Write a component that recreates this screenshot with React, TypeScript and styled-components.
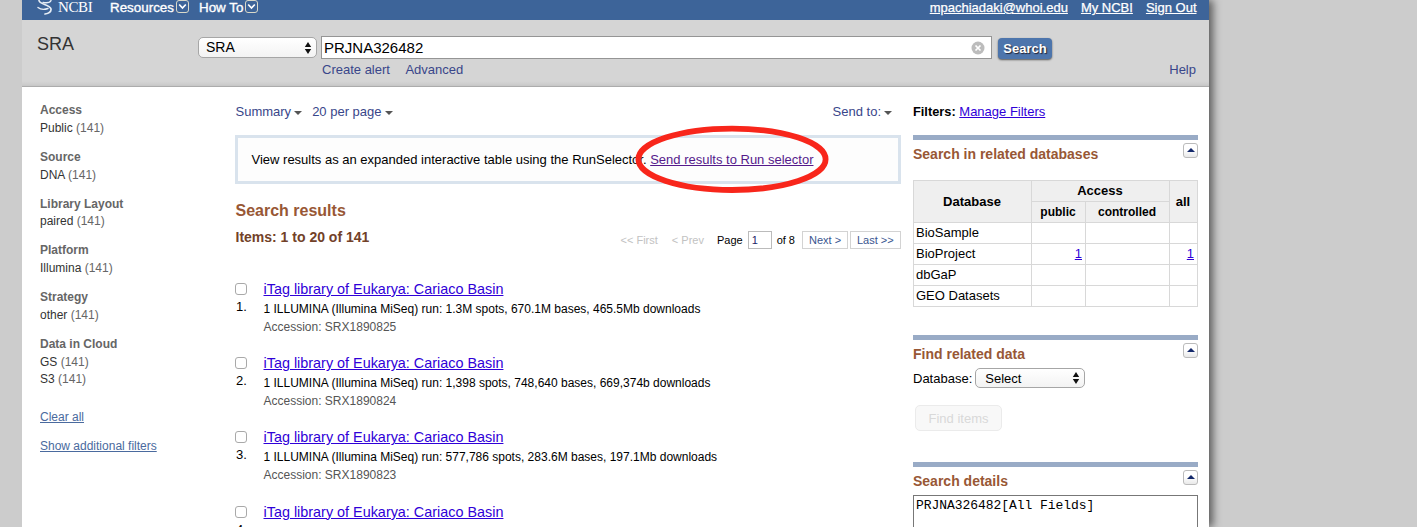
import React from "react";
import styled, { createGlobalStyle } from "styled-components";

const Global = createGlobalStyle`
  * { box-sizing: border-box; }
  html, body { margin: 0; height: 527px; overflow: hidden; background: #cccccc; }
  body { font-family: "Liberation Sans", Arial, Helvetica, sans-serif; font-size: 13px; color: #000; }
  a { color: #2f00d8; text-decoration: underline; }
`;

const Page = styled.div`
  width: 1187px;
  height: 527px;
  margin-left: 22px;
  background: #fff;
  box-shadow: 4px 0 8px rgba(0, 0, 0, 0.55);
  clip-path: inset(0 -14px 0 0);
`;

const TopBar = styled.header`
  height: 20px;
  display: flex;
  align-items: flex-start;
  background: #3d6499;
  color: #fff;
`;

const Logo = styled.div`
  display: flex;
  align-items: flex-start;
  width: 73px;
  margin-left: 15px;
  font: 15px/14px "Liberation Serif", "Times New Roman", serif;
  svg { display: block; margin-right: 5px; }
  span { letter-spacing: -0.4px; }
`;

const MenuItem = styled.div<{ $width: number }>`
  display: flex;
  gap: 2px;
  width: ${(p) => p.$width}px;
  font-size: 13.4px;
  line-height: 15px;
  white-space: nowrap;
  -webkit-text-stroke: 0.35px #fff;
  svg { display: block; }
`;

const UserLinks = styled.nav`
  margin-left: auto;
  margin-right: 12.5px;
  display: flex;
  gap: 13px;
  line-height: 15px;
  a { color: #fff; -webkit-text-stroke: 0.25px #fff; }
`;

const SearchBand = styled.section`
  height: 67px;
  background: linear-gradient(#d5d5d5 0 61px, #cecece 64px, #c6c6c6 66px, #acacac 66px);
  display: flex;
  padding-top: 16px;
`;

const DbName = styled.h1`
  margin: -1px 0 0 15px;
  width: 161px;
  font-size: 18px;
  line-height: 18px;
  font-weight: 400;
  color: #333;
`;

const SelectBox = styled.div<{ $width: number; $height: number; $pad: number }>`
  width: ${(p) => p.$width}px;
  height: ${(p) => p.$height}px;
  display: flex;
  align-items: center;
  justify-content: space-between;
  padding: 0 4px 0 ${(p) => p.$pad}px;
  border: 1px solid #a6a6a6;
  border-radius: 5px;
  background: linear-gradient(#fff, #f3f3f3);
  svg { display: block; }
`;

const DbSelect = styled(SelectBox)`
  margin-top: 1px;
  font-size: 14px;
  line-height: 17px;
`;

const SearchField = styled.div`
  width: 671px;
  margin-left: 4px;
`;

const Input = styled.div`
  height: 23px;
  display: flex;
  align-items: center;
  justify-content: space-between;
  border: 1px solid #959595;
  background: #fff;
  padding: 0 6px 0 2px;
  font-size: 15px;
`;

const SubLinks = styled.div`
  display: flex;
  gap: 15.5px;
  padding: 3px 0 0 1px;
  line-height: 15px;
  color: #39468a;
`;

const SearchSide = styled.div`
  margin-left: 6px;
  width: 198px;
`;

const SearchButton = styled.button`
  display: block;
  width: 54px;
  height: 21px;
  margin-top: 2px;
  padding: 0;
  border: 0;
  border-radius: 4px;
  background: #4d75ac;
  box-shadow: 0 1px 2px rgba(0, 0, 0, 0.6);
  color: #fff;
  font: bold 13px/21px "Liberation Sans", Arial, sans-serif;
  text-shadow: 1px 1px 1px #223;
`;

const Help = styled.div`
  padding-top: 3px;
  line-height: 15px;
  text-align: right;
  color: #39468a;
`;

const Columns = styled.div`
  display: grid;
  grid-template-columns: 195px 666px 285px;
  padding-left: 18px;
`;

const Sidebar = styled.aside`
  padding-top: 15px;
  font-size: 12px;
  line-height: 17.7px;
`;

const FacetGroup = styled.section`
  margin-bottom: 11.4px;
  color: #333;
  h3 { margin: 0; font-size: 12px; color: #666; }
  span { color: #666; }
`;

const FacetLink = styled.div<{ $top: number }>`
  margin-top: ${(p) => p.$top}px;
  a { color: #4a6a9e; }
`;

const Main = styled.main`
  padding-top: 17px;
`;

const Toolbar = styled.div`
  display: flex;
  height: 16px;
  padding-left: 0.5px;
  line-height: 16px;
  color: #39468a;
`;

const Drop = styled.span<{ $right?: boolean }>`
  display: flex;
  align-items: center;
  gap: 3px;
  margin-right: ${(p) => (p.$right ? 9 : 10)}px;
  margin-left: ${(p) => (p.$right ? "auto" : "0")};
  svg { margin-top: 2px; }
`;

const Notice = styled.div`
  position: relative;
  height: 49px;
  margin-top: 15px;
  border: 3px solid #d9e3ed;
  background: #fdfdfd;
  padding-left: 13.5px;
  line-height: 43px;
  white-space: nowrap;
  a { color: #551a8b; }
`;

const Ring = styled.svg`
  position: absolute;
  left: 394px;
  top: -14px;
`;

const ResultsTitle = styled.h2`
  margin: 17px 0 0 0.5px;
  font-size: 16px;
  line-height: 20px;
  color: #985735;
`;

const ResultsBar = styled.div`
  display: flex;
  height: 20px;
  margin-top: 6px;
`;

const Count = styled.h3`
  margin: 0 0 0 0.5px;
  font-size: 14px;
  line-height: 20px;
  color: #724128;
`;

const Pager = styled.div`
  display: flex;
  align-items: center;
  margin: 4px 0 0 auto;
  height: 18px;
  font-size: 11px;
`;

const PagerText = styled.span<{ $off?: boolean; $gap: number }>`
  margin-right: ${(p) => p.$gap}px;
  color: ${(p) => (p.$off ? "#c2c2c2" : "#000")};
`;

const PagerBox = styled.span<{ $width: number; $gap: number; $dark?: boolean }>`
  width: ${(p) => p.$width}px;
  height: 18px;
  margin-right: ${(p) => p.$gap}px;
  padding-left: ${(p) => (p.$dark ? 3 : 6)}px;
  border: 1px solid ${(p) => (p.$dark ? "#bbb" : "#d3d3d3")};
  line-height: 17px;
  white-space: nowrap;
  color: ${(p) => (p.$dark ? "#1c2467" : "#39558f")};
`;

const ResultList = styled.div`
  margin-top: 33px;
`;

const Result = styled.article`
  display: flex;
  height: 74.2px;
`;

const Mark = styled.div`
  width: 28.5px;
  padding-top: 3px;
  font-size: 13px;
  line-height: 16px;
  span { padding-left: 1px; }
`;

const Check = styled.div`
  width: 12px;
  height: 12px;
  margin-bottom: 4px;
  border: 1px solid #a9a9a9;
  border-radius: 3px;
  background: #fff;
`;

const ResultBody = styled.div`
  white-space: nowrap;
  a { display: block; font-size: 14.4px; line-height: 19px; }
  p { margin: 0; font-size: 12px; line-height: 18px; }
  p:first-of-type { padding-top: 1px; }
  p + p { color: #555; }
`;

const Right = styled.aside`
  padding-top: 17px;
  margin-left: 12px;
  width: 285px;
`;

const Filters = styled.div`
  height: 31px;
  line-height: 16px;
  b { font-size: 12.8px; }
`;

const Portlet = styled.section<{ $height: number }>`
  height: ${(p) => p.$height}px;
  border-top: 5px solid #99abc6;
`;

const PortletHead = styled.div`
  display: flex;
  justify-content: space-between;
  height: 24px;
  padding-top: 3px;
  h3 { margin: 0; font-size: 14px; line-height: 22px; color: #985735; }
`;

const Toggle = styled.span`
  width: 15px;
  height: 15px;
  display: flex;
  align-items: center;
  justify-content: center;
  border: 1px solid #bbb;
  border-radius: 3px;
  background: linear-gradient(#fff 45%, #e9e9e9);
  svg { margin-bottom: 1px; }
`;

const DbTable = styled.table`
  margin-top: 16px;
  width: 285px;
  table-layout: fixed;
  border-collapse: collapse;
  font-size: 13px;
  th, td { height: 21px; padding: 0 3px 0 2px; border: 1px solid #d8d8d8; line-height: 16px; }
  th { background: #efefef; font-size: 13px; }
  th.sub { font-size: 12px; }
  td + td { text-align: right; }
`;

const FindRow = styled.div`
  display: flex;
  align-items: center;
  gap: 3px;
  margin-top: 4px;
  white-space: nowrap;
`;

const FindButton = styled.button`
  display: block;
  width: 87px;
  height: 26px;
  margin: 17px 0 0 2px;
  padding: 0;
  border: 1px solid #ebebeb;
  border-radius: 5px;
  background: #f8f8f8;
  color: #d9d9d9;
  font: 13px "Liberation Sans", Arial, sans-serif;
`;

const Details = styled.div`
  height: 33px;
  margin-top: 4px;
  padding: 3px 2px;
  border: 1px solid #777;
  border-bottom: 0;
  font: 13px/14px "Liberation Mono", "Courier New", monospace;
  letter-spacing: -0.05px;
`;

const Helix = () => (
  <svg width="16" height="15" viewBox="0 0 16 15" fill="none" stroke="#e6edf5" strokeLinecap="round">
    <path d="M2 0.5C2.5 4.5 13 4.5 14 9C14.3 12 11 13.5 8 14" strokeWidth="1.7" />
    <path d="M14 0.5C13 3 9 3 6 2.5M1 7.5C4 10 8 9.5 11 8.5" strokeWidth="1.4" />
  </svg>
);

const MenuChevron = () => (
  <svg width="13" height="14" viewBox="0 0 13 14" fill="none" stroke="#fff">
    <rect x="0.5" y="0.5" width="12" height="12" rx="2.5" stroke="#d9d9c9" />
    <path d="M3.2 4.5L6.5 8L9.8 4.5" strokeWidth="1.7" />
  </svg>
);

const UpDown = () => (
  <svg width="8" height="12" viewBox="0 0 8 12">
    <path d="M4 0L7.2 5H0.8ZM4 12L7.2 7H0.8Z" fill="#111" />
  </svg>
);

const Caret = () => (
  <svg width="8" height="4" viewBox="0 0 8 4">
    <path d="M0 0H8L4 4Z" fill="#555" />
  </svg>
);

const Clear = () => (
  <svg width="14" height="14" viewBox="0 0 14 14">
    <circle cx="7" cy="7" r="6.5" fill="#bcbcbc" />
    <path d="M4.5 4.5L9.5 9.5M9.5 4.5L4.5 9.5" stroke="#fff" strokeWidth="1.7" />
  </svg>
);

const Head = ({ title }: { title: string }) => (
  <PortletHead>
    <h3>{title}</h3>
    <Toggle>
      <svg width="8" height="4" viewBox="0 0 8 4"><path d="M0 4L4 0L8 4Z" fill="#14296b" /></svg>
    </Toggle>
  </PortletHead>
);

const facets: [string, string[]][] = [
  ["Access", ["Public"]],
  ["Source", ["DNA"]],
  ["Library Layout", ["paired"]],
  ["Platform", ["Illumina"]],
  ["Strategy", ["other"]],
  ["Data in Cloud", ["GS", "S3"]],
];

const results = [
  ["1.3M spots, 670.1M bases, 465.5Mb", "SRX1890825"],
  ["1,398 spots, 748,640 bases, 669,374b", "SRX1890824"],
  ["577,786 spots, 283.6M bases, 197.1Mb", "SRX1890823"],
  ["1.4M spots, 683.5M bases, 418.4Mb", ""],
];

export default function App() {
  return (
    <>
      <Global />
      <Page>
        <TopBar>
          <Logo><Helix /><span>NCBI</span></Logo>
          <MenuItem $width={89}>Resources <MenuChevron /></MenuItem>
          <MenuItem $width={70}>How To <MenuChevron /></MenuItem>
          <UserLinks>
            <a>mpachiadaki@whoi.edu</a><a>My NCBI</a><a>Sign Out</a>
          </UserLinks>
        </TopBar>
        <SearchBand>
          <DbName>SRA</DbName>
          <DbSelect $width={119} $height={21} $pad={7}>SRA<UpDown /></DbSelect>
          <SearchField>
            <Input>PRJNA326482<Clear /></Input>
            <SubLinks><span>Create alert</span><span>Advanced</span></SubLinks>
          </SearchField>
          <SearchSide>
            <SearchButton>Search</SearchButton>
            <Help>Help</Help>
          </SearchSide>
        </SearchBand>
        <Columns>
          <Sidebar>
            {facets.map(([name, values]) => (
              <FacetGroup key={name}>
                <h3>{name}</h3>
                {values.map((v) => <div key={v}>{v} <span>(141)</span></div>)}
              </FacetGroup>
            ))}
            <FacetLink $top={20}><a>Clear all</a></FacetLink>
            <FacetLink $top={11}><a>Show additional filters</a></FacetLink>
          </Sidebar>
          <Main>
            <Toolbar>
              <Drop>Summary <Caret /></Drop>
              <Drop>20 per page <Caret /></Drop>
              <Drop $right>Send to: <Caret /></Drop>
            </Toolbar>
            <Notice>
              View results as an expanded interactive table using the RunSelector. <a>Send results to Run selector</a>
              <Ring width="200" height="72" viewBox="0 0 200 72">
                <ellipse cx="100" cy="35.3" rx="93.6" ry="30.7" fill="none" stroke="#f8261b" strokeWidth="5.8" />
              </Ring>
            </Notice>
            <ResultsTitle>Search results</ResultsTitle>
            <ResultsBar>
              <Count>Items: 1 to 20 of 141</Count>
              <Pager>
                <PagerText $off $gap={14}>&lt;&lt; First</PagerText>
                <PagerText $off $gap={13}>&lt; Prev</PagerText>
                <PagerText $gap={5}>Page</PagerText>
                <PagerBox $dark $width={24} $gap={5}>1</PagerBox>
                <PagerText $gap={7}>of 8</PagerText>
                <PagerBox $width={46} $gap={2}>Next &gt;</PagerBox>
                <PagerBox $width={51} $gap={0}>Last &gt;&gt;</PagerBox>
              </Pager>
            </ResultsBar>
            <ResultList>
              {results.map(([stats, acc], i) => (
                <Result key={i}>
                  <Mark><Check /><span>{i + 1}.</span></Mark>
                  <ResultBody>
                    <a>iTag library of Eukarya: Cariaco Basin</a>
                    <p>1 ILLUMINA (Illumina MiSeq) run: {stats} downloads</p>
                    {acc && <p>Accession: {acc}</p>}
                  </ResultBody>
                </Result>
              ))}
            </ResultList>
          </Main>
          <Right>
            <Filters><b>Filters:</b> <a>Manage Filters</a></Filters>
            <Portlet $height={200}>
              <Head title="Search in related databases" />
              <DbTable>
                <colgroup><col width="118" /><col width="54" /><col width="84" /><col width="28" /></colgroup>
                <thead>
                  <tr><th rowSpan={2}>Database</th><th colSpan={2}>Access</th><th rowSpan={2}>all</th></tr>
                  <tr><th className="sub">public</th><th className="sub">controlled</th></tr>
                </thead>
                <tbody>
                  {["BioSample", "BioProject", "dbGaP", "GEO Datasets"].map((n) => (
                    <tr key={n}>
                      <td>{n}</td>
                      <td>{n === "BioProject" && <a>1</a>}</td>
                      <td />
                      <td>{n === "BioProject" && <a>1</a>}</td>
                    </tr>
                  ))}
                </tbody>
              </DbTable>
            </Portlet>
            <Portlet $height={127}>
              <Head title="Find related data" />
              <FindRow>
                Database:
                <SelectBox $width={110} $height={20} $pad={9}>Select<UpDown /></SelectBox>
              </FindRow>
              <FindButton>Find items</FindButton>
            </Portlet>
            <Portlet $height={65}>
              <Head title="Search details" />
              <Details>PRJNA326482[All Fields]</Details>
            </Portlet>
          </Right>
        </Columns>
      </Page>
    </>
  );
}
